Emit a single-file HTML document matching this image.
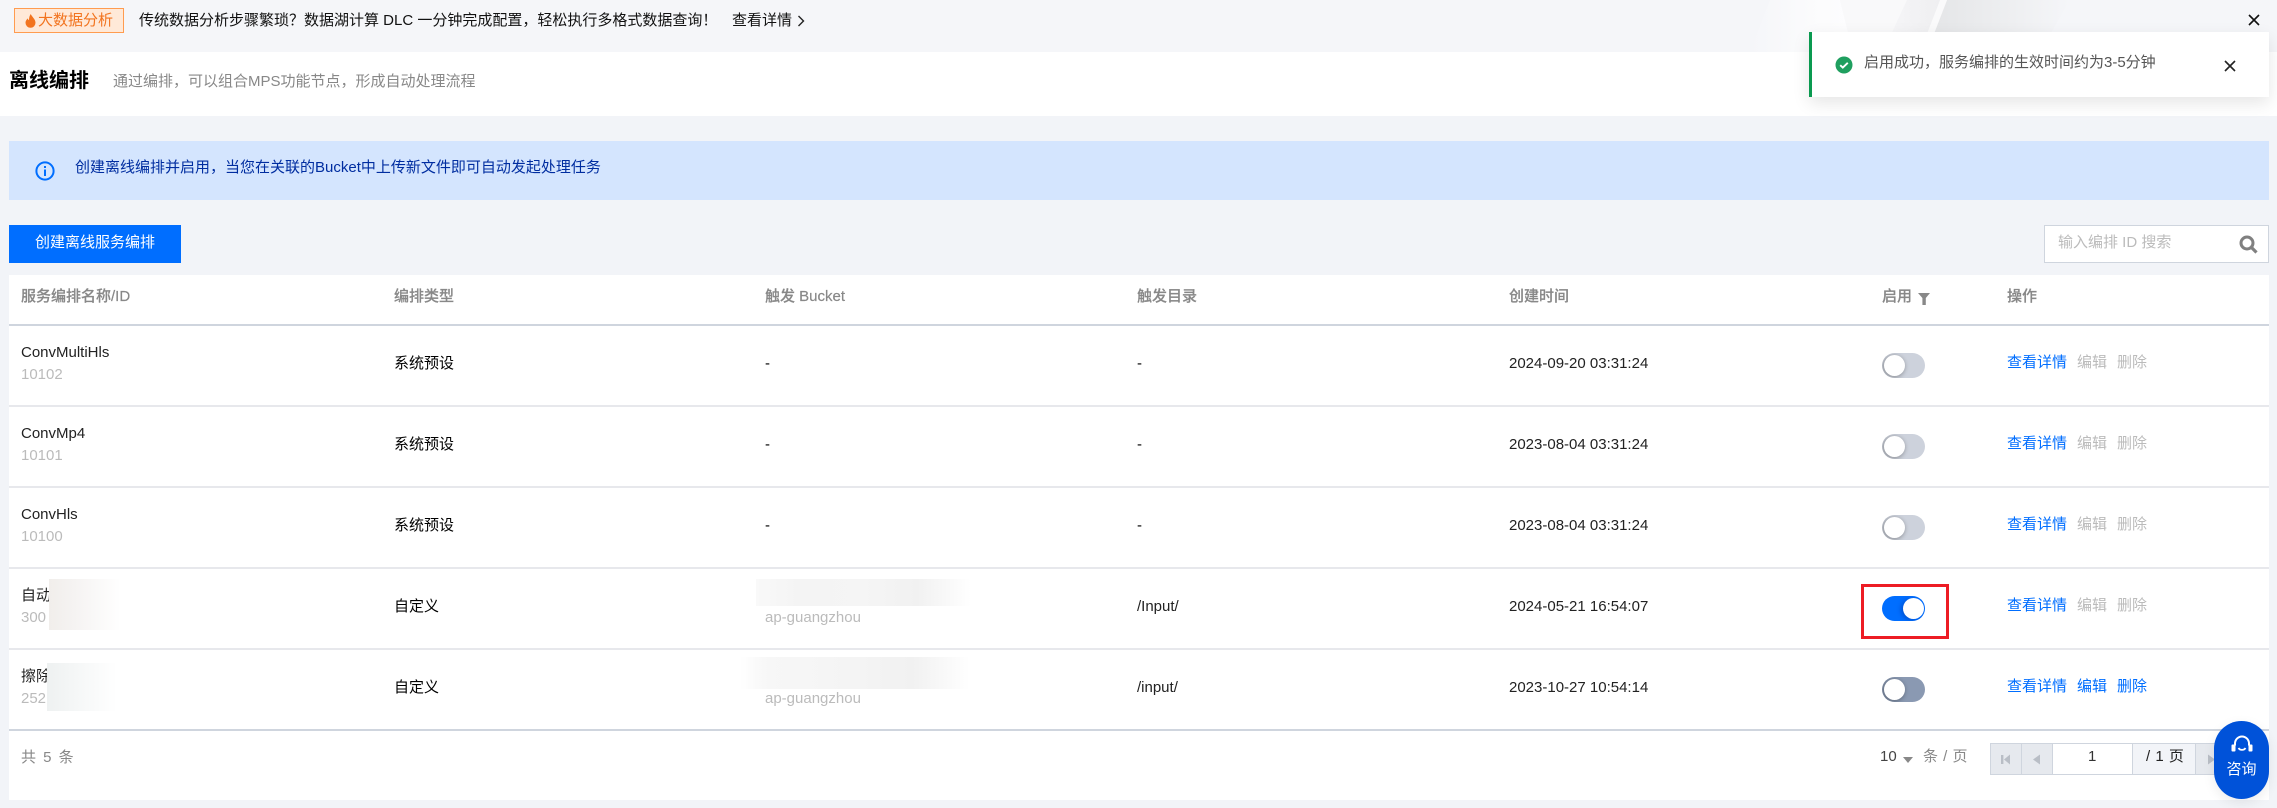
<!DOCTYPE html>
<html lang="zh-CN">
<head>
<meta charset="utf-8">
<title>离线编排</title>
<style>
html,body{margin:0;padding:0}
body{width:2277px;height:808px;overflow:hidden;position:relative;background:#f2f4f8;font-family:"Liberation Sans","Noto Sans CJK SC",sans-serif;font-size:15px;color:#000;-webkit-font-smoothing:auto}
.a{position:absolute}
.t{position:absolute;line-height:20px;white-space:nowrap}
.g{color:#888}
.l{color:#bbb}
.b{color:#006eff}
.d{color:#bbb}
.h{color:#888;font-weight:500;-webkit-text-stroke:.2px #888}
.line{position:absolute;left:9px;width:2260px;height:1.5px;background:#e7e8ec}
.sw{position:absolute;left:1882px;width:43px;height:25px;border-radius:13px;background:#cdd2dc;overflow:hidden}
.sw:after{content:"";position:absolute;left:1.5px;top:2px;width:21px;height:21px;border-radius:50%;background:#fff;box-shadow:-1px 1px 4px 1px rgba(0,0,0,.28)}
.sw.on{background:#006eff}
.sw.on:after{left:21px;box-shadow:-2px 1px 5px rgba(0,30,120,.35)}
.sw.dk{background:#8a99b2}
.pg{position:absolute;top:743px;height:32px;box-sizing:border-box;border:1px solid #cfd5de;background:#e6e9ee}
</style>
</head>
<body>
<!-- top banner -->
<div class="a" style="left:0;top:0;width:2277px;height:52px;background:#f5f6f9;overflow:hidden">
  <svg class="a" style="left:1660px;top:0" width="617" height="52" viewBox="0 0 617 52">
    <defs>
      <linearGradient id="g1" x1="0" y1="0" x2="1" y2="0"><stop offset="0" stop-color="#f5f6f9"/><stop offset=".7" stop-color="#fcfcfd"/><stop offset="1" stop-color="#fdfdfe"/></linearGradient>
      <linearGradient id="g2" x1="0" y1="0" x2="1" y2="0"><stop offset="0" stop-color="#f6f6f8"/><stop offset="1" stop-color="#eeeef0"/></linearGradient>
      <linearGradient id="g3" x1="0" y1="0" x2="1" y2="0"><stop offset="0" stop-color="#e4e5e7"/><stop offset=".6" stop-color="#eeeff1"/><stop offset="1" stop-color="#f5f6f9"/></linearGradient>
    </defs>
    <polygon points="110,0 180,0 193,52 90,52" fill="url(#g1)"/>
    <polygon points="180,0 247,0 223,52 193,52" fill="#f9f9fa"/>
    <polygon points="247,0 287,0 267,52 223,52" fill="url(#g2)"/>
    <polygon points="287,0 410,0 380,52 267,52" fill="url(#g3)"/>
    <polygon points="280,0 287,0 267,52 260,52" fill="#fafafb"/>
  </svg>
</div>
<div class="a" style="left:14px;top:8px;width:110px;height:25px;box-sizing:border-box;border:1px solid #ff9c50;background:#ffe9d8"></div>
<svg class="a" style="left:25px;top:14px" width="11" height="14" viewBox="0 0 11 14"><path d="M5.8 0C6.6 2.6 10.5 5 10.5 8.8A5 5 0 0 1 .5 8.8C.5 6.8 1.7 5.4 2.8 4.4 3 5.6 3.5 6 4 6.1 3.9 3.8 4.6 1.6 5.8 0Z" fill="#f2741f"/></svg>
<div class="t" style="left:38px;top:11px;color:#f2741f">大数据分析</div>
<div class="t" style="left:139px;top:11px;color:#111">传统数据分析步骤繁琐？数据湖计算 DLC 一分钟完成配置，轻松执行多格式数据查询！</div>
<div class="t" style="left:732px;top:11px;color:#111">查看详情</div>
<svg class="a" style="left:797px;top:15px" width="8" height="12" viewBox="0 0 8 12"><path d="M1.5 1 6.5 6 1.5 11" fill="none" stroke="#222" stroke-width="1.4"/></svg>
<svg class="a" style="left:2248px;top:14px" width="12" height="12" viewBox="0 0 12 12"><path d="M1 1 11 11M11 1 1 11" stroke="#111" stroke-width="1.6"/></svg>

<!-- header -->
<div class="a" style="left:0;top:52px;width:2277px;height:64px;background:#fff"></div>
<div class="t" style="left:9px;top:70px;font-size:20px;line-height:22px;font-weight:700;color:#000">离线编排</div>
<div class="t g" style="left:113px;top:72px">通过编排，可以组合MPS功能节点，形成自动处理流程</div>

<!-- alert -->
<div class="a" style="left:9px;top:141px;width:2260px;height:59px;background:#d4e5fe"></div>
<svg class="a" style="left:35px;top:161px" width="20" height="20" viewBox="0 0 20 20"><circle cx="10" cy="10" r="8.6" fill="none" stroke="#006eff" stroke-width="2"/><rect x="9" y="8.5" width="2" height="6.5" fill="#006eff"/><rect x="9" y="5" width="2" height="2" fill="#006eff"/></svg>
<div class="t" style="left:75px;top:158px;color:#002da0">创建离线编排并启用，当您在关联的Bucket中上传新文件即可自动发起处理任务</div>

<!-- toolbar -->
<div class="a" style="left:9px;top:225px;width:172px;height:38px;background:#006eff"></div>
<div class="t" style="left:35px;top:233px;color:#fff">创建离线服务编排</div>
<div class="a" style="left:2044px;top:225px;width:225px;height:38px;box-sizing:border-box;border:1px solid #cfd5de;background:#fff"></div>
<div class="t" style="left:2058px;top:233px;color:#bbb">输入编排 ID 搜索</div>
<svg class="a" style="left:2239px;top:235px" width="19" height="19" viewBox="0 0 19 19"><circle cx="8" cy="8" r="6" fill="none" stroke="#808080" stroke-width="3"/><path d="M12.5 12.5 17.5 17.5" stroke="#808080" stroke-width="3.2"/></svg>

<!-- table -->
<div class="a" style="left:9px;top:275px;width:2260px;height:525px;background:#fff"></div>
<div class="line" style="top:324px;background:#cfd5de"></div>
<div class="line" style="top:405px"></div>
<div class="line" style="top:486px"></div>
<div class="line" style="top:567px"></div>
<div class="line" style="top:648px"></div>
<div class="line" style="top:729px;background:#cfd5de"></div>

<div class="t h" style="left:21px;top:287px">服务编排名称/ID</div>
<div class="t h" style="left:394px;top:287px">编排类型</div>
<div class="t h" style="left:765px;top:287px">触发 Bucket</div>
<div class="t h" style="left:1137px;top:287px">触发目录</div>
<div class="t h" style="left:1509px;top:287px">创建时间</div>
<div class="t h" style="left:1882px;top:287px">启用</div>
<svg class="a" style="left:1918px;top:293px" width="12" height="12" viewBox="0 0 12 12"><path d="M0 0H12L7.8 5V12H4.4V5Z" fill="#888"/></svg>
<div class="t h" style="left:2007px;top:287px">操作</div>

<!-- row 1 -->
<div class="t" style="left:21px;top:343px;color:#222">ConvMultiHls</div>
<div class="t l" style="left:21px;top:365px">10102</div>
<div class="t" style="left:394px;top:354px">系统预设</div>
<div class="t" style="left:765px;top:354px">-</div>
<div class="t" style="left:1137px;top:354px">-</div>
<div class="t" style="left:1509px;top:354px;color:#222">2024-09-20 03:31:24</div>
<div class="sw" style="top:353px"></div>
<div class="t b" style="left:2007px;top:353px">查看详情</div><div class="t d" style="left:2077px;top:353px">编辑</div><div class="t d" style="left:2117px;top:353px">删除</div>

<!-- row 2 -->
<div class="t" style="left:21px;top:424px;color:#222">ConvMp4</div>
<div class="t l" style="left:21px;top:446px">10101</div>
<div class="t" style="left:394px;top:435px">系统预设</div>
<div class="t" style="left:765px;top:435px">-</div>
<div class="t" style="left:1137px;top:435px">-</div>
<div class="t" style="left:1509px;top:435px;color:#222">2023-08-04 03:31:24</div>
<div class="sw" style="top:434px"></div>
<div class="t b" style="left:2007px;top:434px">查看详情</div><div class="t d" style="left:2077px;top:434px">编辑</div><div class="t d" style="left:2117px;top:434px">删除</div>

<!-- row 3 -->
<div class="t" style="left:21px;top:505px;color:#222">ConvHls</div>
<div class="t l" style="left:21px;top:527px">10100</div>
<div class="t" style="left:394px;top:516px">系统预设</div>
<div class="t" style="left:765px;top:516px">-</div>
<div class="t" style="left:1137px;top:516px">-</div>
<div class="t" style="left:1509px;top:516px;color:#222">2023-08-04 03:31:24</div>
<div class="sw" style="top:515px"></div>
<div class="t b" style="left:2007px;top:515px">查看详情</div><div class="t d" style="left:2077px;top:515px">编辑</div><div class="t d" style="left:2117px;top:515px">删除</div>

<!-- row 4 -->
<div class="t" style="left:21px;top:586px;color:#222">自动</div>
<div class="t l" style="left:21px;top:608px">300</div>
<div class="a" style="left:49px;top:579px;width:72px;height:51px;background:linear-gradient(90deg,#f1eeeb 0%,#f5f3f2 35%,#fff 100%)"></div>
<div class="a" style="left:756px;top:579px;width:215px;height:27px;background:linear-gradient(90deg,#f9f9f9 0%,#f4f4f4 20%,#f5f5f5 50%,#f1f1f1 75%,#fff 100%)"></div>
<div class="t l" style="left:765px;top:608px">ap-guangzhou</div>
<div class="t" style="left:394px;top:597px">自定义</div>
<div class="t" style="left:1137px;top:597px;color:#222">/Input/</div>
<div class="t" style="left:1509px;top:597px;color:#222">2024-05-21 16:54:07</div>
<div class="sw on" style="top:596px"></div>
<div class="a" style="left:1861px;top:584px;width:88px;height:55px;box-sizing:border-box;border:3px solid #ed1c24"></div>
<div class="t b" style="left:2007px;top:596px">查看详情</div><div class="t d" style="left:2077px;top:596px">编辑</div><div class="t d" style="left:2117px;top:596px">删除</div>

<!-- row 5 -->
<div class="t" style="left:21px;top:667px;color:#222">擦除</div>
<div class="t l" style="left:21px;top:689px">252</div>
<div class="a" style="left:47px;top:663px;width:70px;height:48px;background:linear-gradient(90deg,#eef1f1 0%,#f4f6f6 35%,#fff 100%)"></div>
<div class="a" style="left:740px;top:657px;width:230px;height:32px;background:linear-gradient(90deg,#fff 0%,#f7f7f7 12%,#f4f4f4 50%,#f1f1f1 75%,#fff 100%)"></div>
<div class="t l" style="left:765px;top:689px">ap-guangzhou</div>
<div class="t" style="left:394px;top:678px">自定义</div>
<div class="t" style="left:1137px;top:678px;color:#222">/input/</div>
<div class="t" style="left:1509px;top:678px;color:#222">2023-10-27 10:54:14</div>
<div class="sw dk" style="top:677px"></div>
<div class="t b" style="left:2007px;top:677px">查看详情</div><div class="t b" style="left:2077px;top:677px">编辑</div><div class="t b" style="left:2117px;top:677px">删除</div>

<!-- footer -->
<div class="t g" style="left:21px;top:748px;word-spacing:3px">共 5 条</div>
<div class="t" style="left:1880px;top:747px;color:#444">10</div>
<svg class="a" style="left:1903px;top:757px" width="10" height="6" viewBox="0 0 10 6"><path d="M0 0H10L5 6Z" fill="#888"/></svg>
<div class="t g" style="left:1923px;top:747px;word-spacing:1px">条 / 页</div>

<div class="pg" style="left:1990px;width:32px"></div>
<div class="pg" style="left:2021px;width:32px"></div>
<div class="pg" style="left:2052px;width:81px;background:#fff"></div>
<div class="pg" style="left:2132px;width:64px;background:#f2f4f8"></div>
<div class="pg" style="left:2195px;width:32px"></div>
<div class="pg" style="left:2226px;width:32px"></div>
<svg class="a" style="left:2001px;top:754px" width="10" height="11" viewBox="0 0 10 11"><rect x="0" y="1" width="2.4" height="9" fill="#b9bec6"/><path d="M9 .5V10.5L3 5.5Z" fill="#b9bec6"/></svg>
<svg class="a" style="left:2033px;top:754px" width="8" height="11" viewBox="0 0 8 11"><path d="M7 .5V10.5L0 5.5Z" fill="#b9bec6"/></svg>
<svg class="a" style="left:2207px;top:754px" width="8" height="11" viewBox="0 0 8 11"><path d="M1 .5V10.5L8 5.5Z" fill="#b9bec6"/></svg>
<div class="t" style="left:2088px;top:747px;color:#333">1</div>
<div class="t" style="left:2146px;top:747px;color:#222;word-spacing:1px">/ 1 页</div>

<!-- consult -->
<div class="a" style="left:2214px;top:721px;width:55px;height:78px;border-radius:27.5px;background:#0052d9;box-shadow:0 4px 12px rgba(0,0,0,.08)"></div>
<svg class="a" style="left:2230px;top:734px" width="24" height="24" viewBox="0 0 24 24"><path d="M5 11.5V9.5A7 7 0 0 1 19 9.5V11.5" fill="none" stroke="#fff" stroke-width="2"/><rect x="1.5" y="10.5" width="4" height="7" rx="1" fill="#fff"/><rect x="18.5" y="10.5" width="4" height="7" rx="1" fill="#fff"/><path d="M8.5 14C10 16.5 14 16.5 15.5 14" fill="none" stroke="#fff" stroke-width="1.8"/></svg>
<div class="t" style="left:2226.5px;top:760px;color:#fff">咨询</div>

<!-- notification -->
<div class="a" style="left:1809px;top:32px;width:460px;height:65px;box-sizing:border-box;border-left:3px solid #0a9a50;background:#fff;box-shadow:0 6px 16px rgba(0,0,0,.10)"></div>
<svg class="a" style="left:1835px;top:56px" width="18" height="18" viewBox="0 0 18 18"><circle cx="9" cy="9" r="8.5" fill="#1f9f5f"/><path d="M5.2 9.2 7.8 11.6 12.8 6.8" fill="none" stroke="#fff" stroke-width="1.9"/></svg>
<div class="t" style="left:1864px;top:53px;color:#555">启用成功，服务编排的生效时间约为3-5分钟</div>
<svg class="a" style="left:2224px;top:60px" width="12" height="12" viewBox="0 0 12 12"><path d="M1 1 11 11M11 1 1 11" stroke="#222" stroke-width="1.6"/></svg>
</body>
</html>
